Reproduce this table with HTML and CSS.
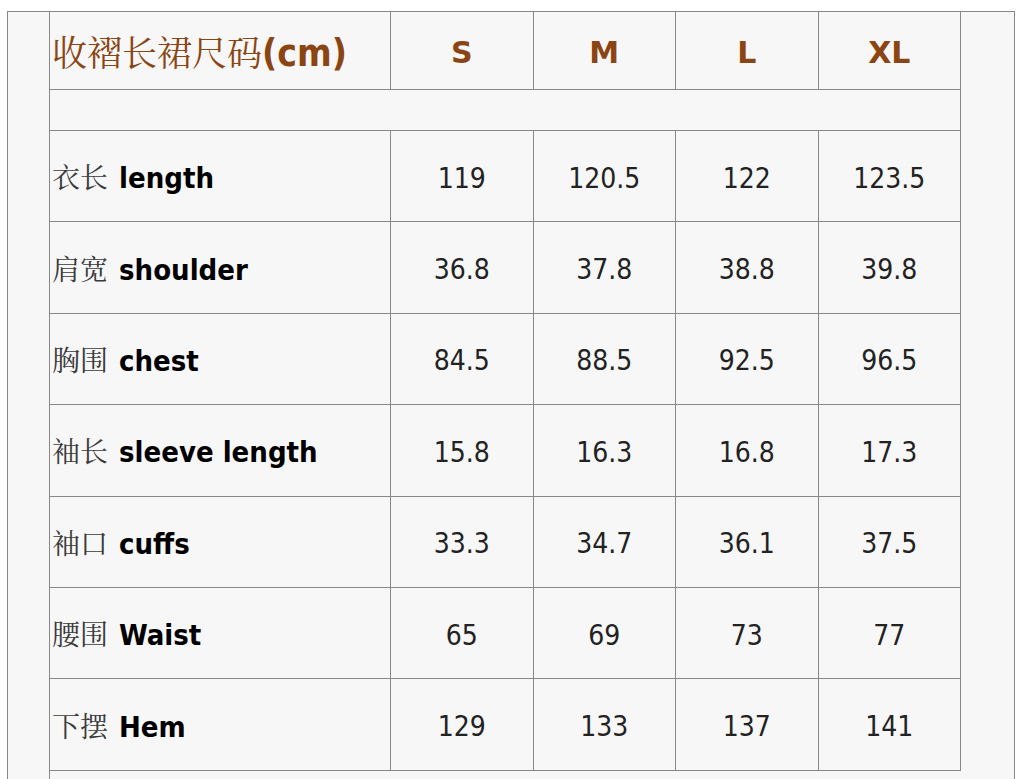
FILE: index.html
```html
<!DOCTYPE html>
<html lang="zh">
<head>
<meta charset="utf-8">
<title>收褶长裙尺码</title>
<link rel="stylesheet" href="styles.css">
</head>
<body>
<div class="wrap">
<table class="size">
  <colgroup>
    <col class="c-side-l">
    <col class="c-label">
    <col class="c-val">
    <col class="c-val">
    <col class="c-val">
    <col class="c-val">
    <col class="c-side-r">
  </colgroup>
  <tbody>
    <tr class="r-head">
      <td class="side" rowspan="10"></td>
      <td class="label"><span class="zh head-zh">收褶长裙尺码</span><b class="head-en">(cm)</b></td>
      <td class="val size-h">S</td>
      <td class="val size-h">M</td>
      <td class="val size-h">L</td>
      <td class="val size-h">XL</td>
      <td class="side" rowspan="10"></td>
    </tr>
    <tr class="r-gap"><td colspan="5"></td></tr>
    <tr class="r-data">
      <td class="label"><span class="zh">衣长</span> <b class="en">length</b></td>
      <td class="val">119</td><td class="val">120.5</td><td class="val">122</td><td class="val">123.5</td>
    </tr>
    <tr class="r-data">
      <td class="label"><span class="zh">肩宽</span> <b class="en">shoulder</b></td>
      <td class="val">36.8</td><td class="val">37.8</td><td class="val">38.8</td><td class="val">39.8</td>
    </tr>
    <tr class="r-data">
      <td class="label"><span class="zh">胸围</span> <b class="en">chest</b></td>
      <td class="val">84.5</td><td class="val">88.5</td><td class="val">92.5</td><td class="val">96.5</td>
    </tr>
    <tr class="r-data">
      <td class="label"><span class="zh">袖长</span> <b class="en">sleeve length</b></td>
      <td class="val">15.8</td><td class="val">16.3</td><td class="val">16.8</td><td class="val">17.3</td>
    </tr>
    <tr class="r-data">
      <td class="label"><span class="zh">袖口</span> <b class="en">cuffs</b></td>
      <td class="val">33.3</td><td class="val">34.7</td><td class="val">36.1</td><td class="val">37.5</td>
    </tr>
    <tr class="r-data">
      <td class="label"><span class="zh">腰围</span> <b class="en">Waist</b></td>
      <td class="val">65</td><td class="val">69</td><td class="val">73</td><td class="val">77</td>
    </tr>
    <tr class="r-data">
      <td class="label"><span class="zh">下摆</span> <b class="en">Hem</b></td>
      <td class="val">129</td><td class="val">133</td><td class="val">137</td><td class="val">141</td>
    </tr>
    <tr class="r-tail"><td class="tail" colspan="5"></td></tr>
  </tbody>
</table>
</div>
</body>
</html>
```
FILE: styles.css
```css
html, body {
  margin: 0;
  padding: 0;
  background: #ffffff;
}

.wrap {
  padding: 11px 0 0 7px;
}

.size {
  border-collapse: collapse;
  table-layout: fixed;
  width: 1008px;
  background: #f7f7f7;
  border: 1px solid #888888;
  font-family: "DejaVu Sans Condensed", "DejaVu Sans", sans-serif;
  font-stretch: semi-condensed;
  font-size: 28px;
  color: #222222;
}

.c-side-l { width: 42px; }
.c-label { width: 341px; }
.c-val { width: 142.5px; }
.c-side-r { width: 54px; }

.size td {
  border: 1px solid #888888;
  padding: 0 2px;
  vertical-align: middle;
}

.size td.side {
  border: none;
}

.size td.tail {
  border-right: none;
  border-bottom: none;
}

.r-head { height: 78px; }
.r-gap { height: 41px; }
.r-data { height: 91.4px; }
.r-tail { height: 60px; }

.label {
  text-align: left;
  white-space: nowrap;
}

.val {
  text-align: center;
  padding-top: 4px !important;
}

.zh {
  font-family: "Noto Serif CJK SC", "Noto Sans CJK SC", serif;
  font-weight: 400;
  color: #3a3a3a;
}

.label b {
  font-weight: 700;
  font-size: 29px;
  color: #000000;
}

.label b.en {
  margin-left: 3px;
}

.head-zh {
  font-size: 35px;
  color: #8b4513;
}

.label b.head-en {
  font-size: 37px;
  color: #8b4513;
}

.size-h {
  font-family: "DejaVu Sans", sans-serif;
  font-stretch: normal;
  font-size: 30px;
  font-weight: 700;
  color: #8b4513;
}
```
